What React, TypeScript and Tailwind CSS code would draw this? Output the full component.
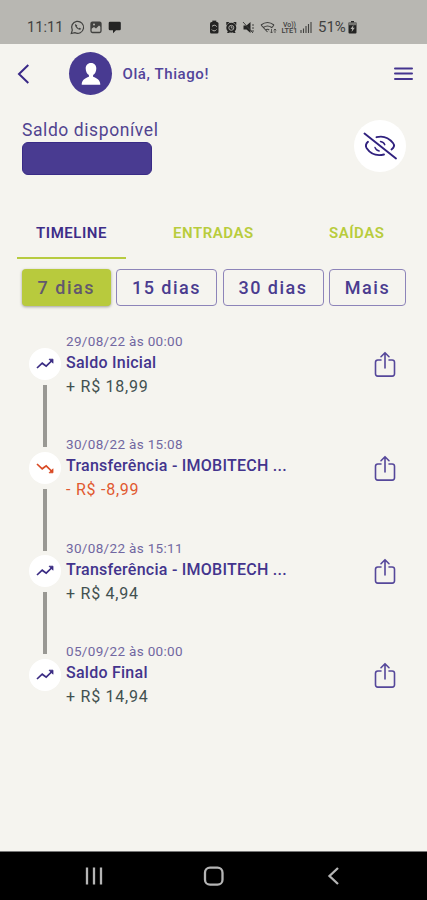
import React from "react";

type Entry = { date: string; title: string; amount: string; down?: boolean };

const entries: Entry[] = [
  { date: "29/08/22 às 00:00", title: "Saldo Inicial", amount: "+ R$ 18,99" },
  { date: "30/08/22 às 15:08", title: "Transferência - IMOBITECH ...", amount: "- R$ -8,99", down: true },
  { date: "30/08/22 às 15:11", title: "Transferência - IMOBITECH ...", amount: "+ R$ 4,94" },
  { date: "05/09/22 às 00:00", title: "Saldo Final", amount: "+ R$ 14,94" },
];

function StatusBar() {
  return (
    <div className="flex h-11 items-start bg-[#b8b7b2] pt-[19px] text-[#41413f]">
      <span className="ml-[27px] w-[43px] text-[14.5px] leading-[17px] tracking-[0.1px] whitespace-nowrap">11:11</span>
      {/* Notification icons */}
      <svg className="h-[17px] w-[52px]" viewBox="0 0 52 17" fill="none">
        <path d="M1.3 14.5l1-3.4A6 6 0 1 1 4.8 13.600z" stroke="currentColor" strokeWidth="1.2" />
        <path d="M5.2 5.100c-1 2 2.600 6.200 5 5.700l1-1-1.700-1.100-.9.700-1.900-2 .6-1z" fill="currentColor" />
        <rect x="21" y="3.100" width="10" height="10.400" rx="1.400" stroke="currentColor" strokeWidth="1.300" />
        <path d="M21 3h10v5l-2-1.500-3 3-2-1.500-3 2z" fill="currentColor" />
        <circle cx="24" cy="5.600" r="1" fill="#b8b7b2" />
        <path d="M40 2.700h9.500q1.300 0 1.300 1.300v6q0 1.300-1.300 1.300H46l-3 3v-3h-3q-1.300 0-1.300-1.300V4q0-1.300 1.300-1.300z" fill="#242423" />
      </svg>
      {/* Device state icons */}
      <svg className="ml-[87px] h-[17px] w-[105px]" viewBox="0 0 105 17" fill="none" stroke="currentColor">
        <g fill="#242423" stroke="none">
          <rect x="1" y="3" width="8.500" height="11.500" rx="1.500" />
          <rect x="3.300" y="1.600" width="4" height="2" />
          <circle cx="22.300" cy="8.800" r="5" />
          <path d="M17.300 3h3.200l-3.200 3.200zM27.300 3h-3.200l3.200 3.200zM18 14h3l-2-2zM26.600 14h-3l2-2z" />
          <path d="M34.500 6.500h3l4-3.500v11l-4-3.500h-3z" />
        </g>
        <path d="M3 7.500a2.700 2.700 0 0 1 4.700.2M7.500 10.500a2.700 2.700 0 0 1-4.700 0" stroke="#b8b7b2" />
        <circle cx="22.300" cy="8.800" r="2.500" stroke="#b8b7b2" strokeWidth=".9" />
        <path d="M22.300 7v2h1.500" stroke="#b8b7b2" strokeWidth=".8" />
        <path d="M34 3l10 11M43 6h2M43 9h2M42 12h3" strokeWidth="1" />
        <path d="M52 6q6.500-5 13 0M54.300 8.500q4.200-3 8.400 0M56.800 11q1.700-1.500 3.400 0M52 6l6.500 7M65 6l-2.500 3" strokeWidth="1.100" />
        <path d="M62.500 10v4m-1.300-1.300l1.300 1.300 1.300-1.300M66 14v-4m-1.300 1.300L66 10l1.300 1.300" strokeWidth=".8" />
        <path d="M92 14v-3M94.500 14V9.500M97 14V7M99.500 14V5M102 14V3" strokeWidth="1.100" />
        <text x="74" y="7.500" fontSize="6.500" fontWeight="500" textLength="13" lengthAdjust="spacingAndGlyphs" fill="currentColor" stroke="none">Vo))</text>
        <text x="72.500" y="14.400" fontSize="7" fontWeight="500" textLength="16" lengthAdjust="spacingAndGlyphs" fill="currentColor" stroke="none">LTE1</text>
      </svg>
      <span className="ml-[4px] w-[30px] text-[15px] leading-[17px] whitespace-nowrap">51%</span>
      <svg className="h-[17px] w-[10px]" viewBox="0 0 10 17">
        <path d="M3 2h3v1.500h1.500q1 0 1 1v9q0 1-1 1h-6q-1 0-1-1v-9q0-1 1-1H3z" fill="#242423" />
        <path d="M.4 3.400h8.200v2.800H.4z" fill="#777773" />
        <path d="M5.500 6L2.500 10h1.700L3.600 13l3.200-4.200H5z" fill="#b8b7b2" />
      </svg>
    </div>
  );
}

function Header() {
  return (
    <header className="flex h-[59px] items-center pl-[16px] pr-[14px] text-[#44348f]">
      <svg className="h-5 w-4" viewBox="0 0 16 20" fill="none" stroke="#392887" strokeWidth="2">
        <path d="M12.300 1L3 10l9.300 9" />
      </svg>
      <div className="ml-[37px] flex size-[43px] items-center justify-center rounded-full bg-[#483a91]">
        <svg className="h-6 w-6" viewBox="0 0 24 24" fill="white">
          <path d="M12 1C8.500 1 6.600 3.600 6.700 6.600c0 2.700 1.300 5.500 3.200 6.500v1.700C6 16.300 2.700 18 2.700 22.800h18.600c0-4.800-3.300-6.500-7.200-8v-1.700c1.900-1 3.200-3.800 3.200-6.500C17.400 3.600 15.500 1 12 1z" />
        </svg>
      </div>
      <span className="ml-[10.500px] pt-px text-[15px] font-medium tracking-[0.600px] text-[#52449a]">Olá, Thiago!</span>
      <svg className="ml-auto h-[15px] w-5" viewBox="0 0 20 15" stroke="#44348f" strokeWidth="2" strokeLinecap="round">
        <path d="M2 2.500h17M2 7.500h17M2 12.900h17" />
      </svg>
    </header>
  );
}

function Balance() {
  return (
    <section className="flex h-[105px] justify-between pl-[22px] pr-[21px]">
      <div className="pt-[17px] text-[#51448f]">
        <div className="h-[22px] text-[17.500px] leading-[21px] tracking-[0.580px]">Saldo disponível</div>
        <div className="h-[33px] w-[130px] rounded-[6px] border border-[#392b86] bg-[#493b91]" />
      </div>
      <button aria-label="Mostrar saldo" className="mt-[17px] flex size-[52px] items-center justify-center rounded-full bg-white">
        <svg className="h-7 w-9" viewBox="0 0 36 28" fill="none" stroke="#30217e" strokeWidth="1.900" strokeLinecap="round">
          <path d="M2.500 1.500L34 26.500" />
          <path d="M14.500 5.200c6.500-1.700 12.500.8 16.500 5.800 1.800 2.200 1.300 4.500-1.500 6.500M6 9.800C3.300 12.300 3.300 14 4.700 16.200c3.600 5.300 10 8 17.300 6.300" />
          <path d="M18.500 9.500c2.200.3 3.700 1.400 4.300 3.200M13 15.500c.8 2 2.200 3.200 4.200 3.500" strokeWidth="1.400" />
        </svg>
      </button>
    </section>
  );
}

function Tabs() {
  return (
    <nav className="flex h-[51px] pl-[17px] text-[15px] font-semibold leading-[19px] tracking-[0.530px] text-[#b8cc3c]">
      <div className="flex w-[109px] justify-center border-b-2 border-[#b7cb40] pt-[16px] text-[#3d2d88]">TIMELINE</div>
      <div className="ml-[47px] w-[83px] pt-[16px]">ENTRADAS</div>
      <div className="ml-[73px] pt-[16px]">SAÍDAS</div>
    </nav>
  );
}

function Filters() {
  const base = "flex h-[37px] items-center justify-center rounded-[4px] text-[18px] font-medium leading-[22px] tracking-[1.500px] whitespace-nowrap";
  return (
    <div className="mt-[10px] flex gap-[5.500px] pl-[22px]">
      <button className={base + " w-[88.500px] bg-[#b8ca3d] text-[#62586e] shadow-[0_1px_3px_rgba(0,0,0,0.35)]"}>7 dias</button>
      <button className={base + " w-[101px] border border-[#8d84b9] text-[#4a3c8f]"}>15 dias</button>
      <button className={base + " w-[101px] border border-[#8d84b9] text-[#4a3c8f]"}>30 dias</button>
      <button className={base + " w-[77px] border border-[#8d84b9] text-[#4a3c8f]"}>Mais</button>
    </div>
  );
}

function TimelineRow({ entry, last }: { entry: Entry; last: boolean }) {
  return (
    <li className="flex h-[103.600px] pl-[29px]">
      <div className="flex w-8 flex-col items-center pt-[15.500px]">
        <div className="flex size-8 shrink-0 items-center justify-center rounded-full bg-white">
          <svg
            className={entry.down ? "h-3 w-5 text-[#d94a24]" : "h-3 w-5 text-[#3a2b83]"}
            viewBox="0 0 20 12"
            fill="none"
            stroke="currentColor"
            strokeWidth="1.700"
          >
            <g transform={entry.down ? "matrix(1 0 0 -1 0 12)" : undefined}>
              <path d="M2 10l5.200-4.800 4 3L16.500 3" />
              <path d="M14 1.200h4v4z" fill="currentColor" strokeWidth=".8" />
            </g>
          </svg>
        </div>
        {!last && <div className="mt-[5px] h-[62px] w-1 shrink-0 bg-[#999893]" />}
      </div>
      <div className="ml-[5px] w-[240px] whitespace-nowrap">
        <div className="h-[20px] text-[13.500px] leading-[16px] tracking-[0.330px] text-[#7167a1]">{entry.date}</div>
        <div className="h-[24px] text-[16px] font-medium leading-[20px] tracking-[0.250px] text-[#43348d]">{entry.title}</div>
        <div className={entry.down ? "text-[16px] leading-[20px] tracking-[0.750px] text-[#e15930]" : "text-[16px] leading-[20px] tracking-[0.750px] text-[#42504f]"}>
          {entry.amount}
        </div>
      </div>
      <svg className="ml-[67.500px] mt-[18.800px] h-[27px] w-[22px]" viewBox="0 0 22 27" fill="none" stroke="#55479a" strokeWidth="1.600" strokeLinecap="round" strokeLinejoin="round">
        <path d="M7 9H3.800Q1.500 9 1.500 11.300v11.500q0 2.300 2.300 2.300h14.400q2.300 0 2.300-2.300V11.300Q20.500 9 18.200 9H15" />
        <path d="M11 17V2M7 5.700L11 1.700l4 4" />
      </svg>
    </li>
  );
}

export default function App() {
  return (
    <div className="flex h-[900px] w-[427px] flex-col overflow-hidden bg-[#f5f4ef] font-['Roboto',sans-serif]">
      <StatusBar />
      <Header />
      <Balance />
      <Tabs />
      <Filters />
      <ul className="mt-[26.500px]">
        {entries.map((entry, i) => (
          <TimelineRow key={entry.date} entry={entry} last={i === entries.length - 1} />
        ))}
      </ul>
      <footer className="mt-auto h-[49px] border-t border-[#777] bg-black">
        <svg className="h-12 w-full" viewBox="0 0 427 48" fill="none" stroke="#b5b5b5" strokeWidth="2.300">
          <path d="M87 15.500v17M94 15.500v17M101 15.500v17" />
          <rect x="205" y="15.700" width="17.500" height="17" rx="5" />
          <path d="M338 16l-8.500 8 8.500 8" />
        </svg>
      </footer>
    </div>
  );
}
